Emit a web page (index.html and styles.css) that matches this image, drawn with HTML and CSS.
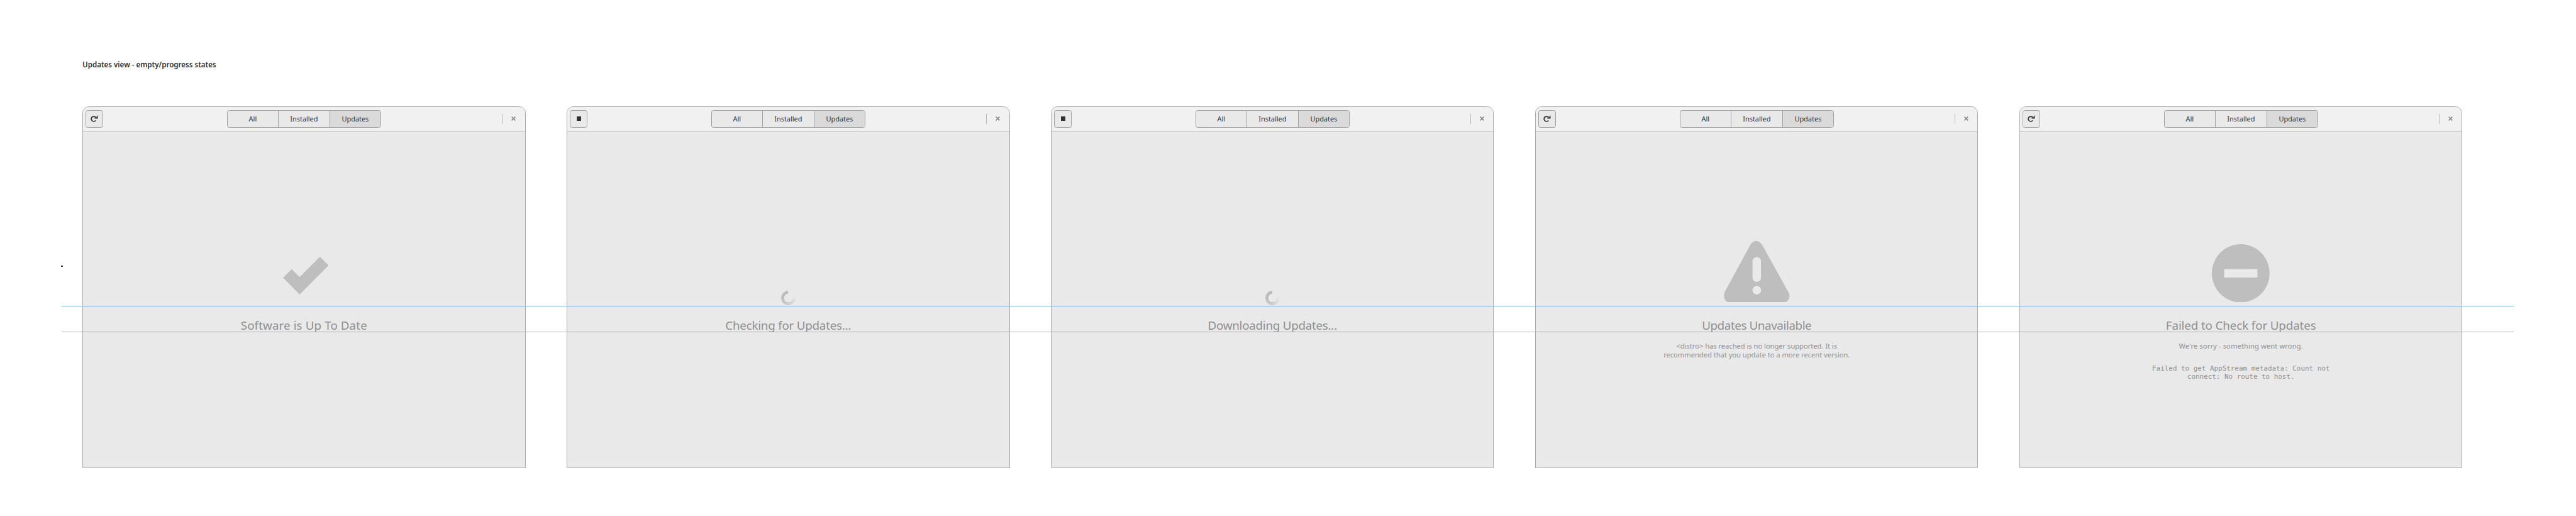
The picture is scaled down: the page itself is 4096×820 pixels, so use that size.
FILE: index.html
```
<!DOCTYPE html>
<html lang="en">
<head>
<meta charset="utf-8">
<title>Updates view</title>
<link rel="stylesheet" href="styles.css">
</head>
<body>
<div class="board">
  <h1 class="title">Updates view - empty/progress states</h1>
  <div class="windows">
    <section class="window">
      <header class="bar">
        <div class="tool"><svg class="ico" viewBox="0 0 16 16"><path d="M10.400 10.900A4.500 4.500 0 1 1 10.600 5.300" fill="none" stroke="#2e3436" stroke-width="2"/><path d="M14.300 2V7.400H8.300V6.400H10L12.800 3.400V2Z" fill="#2e3436"/></svg></div>
        <nav class="tabs"><span class="tab">All</span><span class="tab">Installed</span><span class="tab on">Updates</span></nav>
        <div class="end"><i class="sep"></i><svg class="close" viewBox="0 0 8 8"><path d="M.8.8 7.2 7.2M7.2.8.8 7.2" stroke="#888a85" stroke-width="2"/></svg></div>
      </header>
      <main class="body">
        <div class="art"><svg class="check" viewBox="0 0 83 69"><path d="M0 38.2 15.7 22.6 30.3 37 67.3 0 83 15.6 30.3 68.7Z" fill="#bebebe"/></svg></div>
        <h2 class="head uptodate">Software is Up To Date</h2>
      </main>
    </section>
    <section class="window">
      <header class="bar">
        <div class="tool"><i class="stop"></i></div>
        <nav class="tabs"><span class="tab">All</span><span class="tab">Installed</span><span class="tab on">Updates</span></nav>
        <div class="end"><i class="sep"></i><svg class="close" viewBox="0 0 8 8"><path d="M.8.8 7.2 7.2M7.2.8.8 7.2" stroke="#888a85" stroke-width="2"/></svg></div>
      </header>
      <main class="body">
        <div class="art"><i class="spinner"></i></div>
        <h2 class="head checking">Checking for Updates...</h2>
      </main>
    </section>
    <section class="window">
      <header class="bar">
        <div class="tool"><i class="stop"></i></div>
        <nav class="tabs"><span class="tab">All</span><span class="tab">Installed</span><span class="tab on">Updates</span></nav>
        <div class="end"><i class="sep"></i><svg class="close" viewBox="0 0 8 8"><path d="M.8.8 7.2 7.2M7.2.8.8 7.2" stroke="#888a85" stroke-width="2"/></svg></div>
      </header>
      <main class="body">
        <div class="art"><i class="spinner"></i></div>
        <h2 class="head downloading">Downloading Updates...</h2>
      </main>
    </section>
    <section class="window">
      <header class="bar">
        <div class="tool"><svg class="ico" viewBox="0 0 16 16"><path d="M10.400 10.900A4.500 4.500 0 1 1 10.600 5.300" fill="none" stroke="#2e3436" stroke-width="2"/><path d="M14.300 2V7.400H8.300V6.400H10L12.800 3.400V2Z" fill="#2e3436"/></svg></div>
        <nav class="tabs"><span class="tab">All</span><span class="tab">Installed</span><span class="tab on">Updates</span></nav>
        <div class="end"><i class="sep"></i><svg class="close" viewBox="0 0 8 8"><path d="M.8.8 7.2 7.2M7.2.8.8 7.2" stroke="#888a85" stroke-width="2"/></svg></div>
      </header>
      <main class="body">
        <div class="art"><svg class="warn" viewBox="0 0 120 112"><path d="M59 0C54 0 50.500 3 48 7.500L2 92C-2.500 102 2 112 11 112H108C117 112 122.500 102 117.500 93L70 7.500C67 3 63.500 0 59 0Z" fill="#bebebe"/><rect x="52.300" y="29.300" width="15.400" height="45.200" rx="7.700" fill="#e9e9e9"/><circle cx="60" cy="89.500" r="7.800" fill="#e9e9e9"/></svg></div>
        <h2 class="head unavailable">Updates Unavailable</h2>
        <p class="note">&lt;distro&gt; has reached is no longer supported. It is<br>recommended that you update to a more recent version.</p>
      </main>
    </section>
    <section class="window">
      <header class="bar">
        <div class="tool"><svg class="ico" viewBox="0 0 16 16"><path d="M10.400 10.900A4.500 4.500 0 1 1 10.600 5.300" fill="none" stroke="#2e3436" stroke-width="2"/><path d="M14.300 2V7.400H8.300V6.400H10L12.800 3.400V2Z" fill="#2e3436"/></svg></div>
        <nav class="tabs"><span class="tab">All</span><span class="tab">Installed</span><span class="tab on">Updates</span></nav>
        <div class="end"><i class="sep"></i><svg class="close" viewBox="0 0 8 8"><path d="M.8.8 7.2 7.2M7.2.8.8 7.2" stroke="#888a85" stroke-width="2"/></svg></div>
      </header>
      <main class="body">
        <div class="art"><svg class="fail" viewBox="0 0 105 106"><ellipse cx="52.500" cy="53" rx="52.500" ry="53" fill="#bebebe"/><rect x="22.300" y="45.300" width="60.500" height="15.500" fill="#e9e9e9"/></svg></div>
        <h2 class="head failed">Failed to Check for Updates</h2>
        <p class="note sorry">We're sorry - something went wrong.</p>
        <p class="log">Failed to get AppStream metadata: Count not<br>connect: No route to host.</p>
      </main>
    </section>
  </div>
  <i class="guide g1"></i>
  <i class="guide g2"></i>
  <i class="dot"></i>
</div>
</body>
</html>
```
FILE: styles.css
```
* { box-sizing: border-box; }
html, body { margin: 0; overflow: hidden; background: #fff; }
.board { zoom: .87372; position: relative; width: 4688px; height: 938px; padding: 106px 0 0 150px; font-family: "Noto Sans", "Open Sans", sans-serif; color: #2e3436; }
.title { margin: 0; height: 87.3px; font-size: 13.3px; line-height: 22px; font-weight: 600; letter-spacing: -.035px; white-space: nowrap; }
.windows { display: flex; gap: 75px; }
.window { flex: none; width: 806.3px; height: 658.5px; border: 1px solid #a9aaa8; border-radius: 12px 12px 0 0; background: #e9e9e9; overflow: hidden; display: flex; flex-direction: column; }
.bar { height: 44.7px; flex: none; background: #f1f1f1; border-bottom: 2px solid #bdbebc; display: grid; grid-template-columns: 1fr auto 1fr; align-items: center; padding: 0 16.7px 0 5px; }
.tool { width: 32px; height: 32px; border: 1px solid #a0a19f; border-radius: 4px; background: #e9e9e9; display: flex; align-items: center; justify-content: center; }
.ico { width: 16px; height: 16px; }
.stop { width: 8px; height: 8px; background: #2e3436; }
.tabs { display: flex; margin-left: 12px; width: 281px; height: 32px; border: 1px solid #a0a19f; border-radius: 4px; background: #e9e9e9; overflow: hidden; }
.tab { flex: 1; display: flex; align-items: center; justify-content: center; padding-bottom: 1.2px; font-size: 12.6px; letter-spacing: -.05px; }
.tab + .tab { border-left: 1px solid #a0a19f; }
.tab.on { background: #dadada; }
.end { display: flex; align-items: center; justify-content: flex-end; gap: 16.5px; }
.sep { width: 1px; height: 19px; background: #b5b6b4; }
.close { width: 8px; height: 8px; }
.body { flex: 1; display: flex; flex-direction: column; align-items: center; white-space: nowrap; color: #8f908f; text-align: center; }
.art { height: 310.7px; display: flex; align-items: flex-end; justify-content: center; }
.check { width: 83px; height: 69px; margin: 0 0 14.4px 7.5px; }
.spinner { width: 26px; height: 26px; margin-bottom: -5.3px; border-radius: 50%; background: conic-gradient(#e9e9e9 0 18%, #dedede 32%, #cbcbcb 52%, #bebebe 75%, #bababa 100%); mask: radial-gradient(circle, transparent 28%, #000 30%); mask: radial-gradient(circle closest-side, transparent 56%, #000 60%); }
.warn { width: 120px; height: 112px; }
.fail { width: 105px; height: 106px; }
.head { margin: 26.3px 0 0; height: 34px; font-size: 21.5px; line-height: 34px; font-weight: 400; }
.uptodate { letter-spacing: .12px; }
.checking { letter-spacing: -.26px; }
.downloading { letter-spacing: -.29px; }
.unavailable { letter-spacing: -.45px; }
.failed { letter-spacing: -.14px; }
.note { margin: 11.8px 0 0; font-size: 12.8px; line-height: 15.3px; letter-spacing: -.035px; }
.sorry { letter-spacing: .12px; }
.log { margin: 27px 0 0; font: 12.5px/14.3px "DejaVu Sans Mono", monospace; }
.guide { position: absolute; left: 112px; width: 4463px; height: 1.2px; background: #8ab4e5; }
.g1 { top: 556px; }
.g2 { top: 603px; }
.dot { position: absolute; left: 111px; top: 482.5px; width: 3px; height: 3px; background: #222; border-radius: 1px; }
```
